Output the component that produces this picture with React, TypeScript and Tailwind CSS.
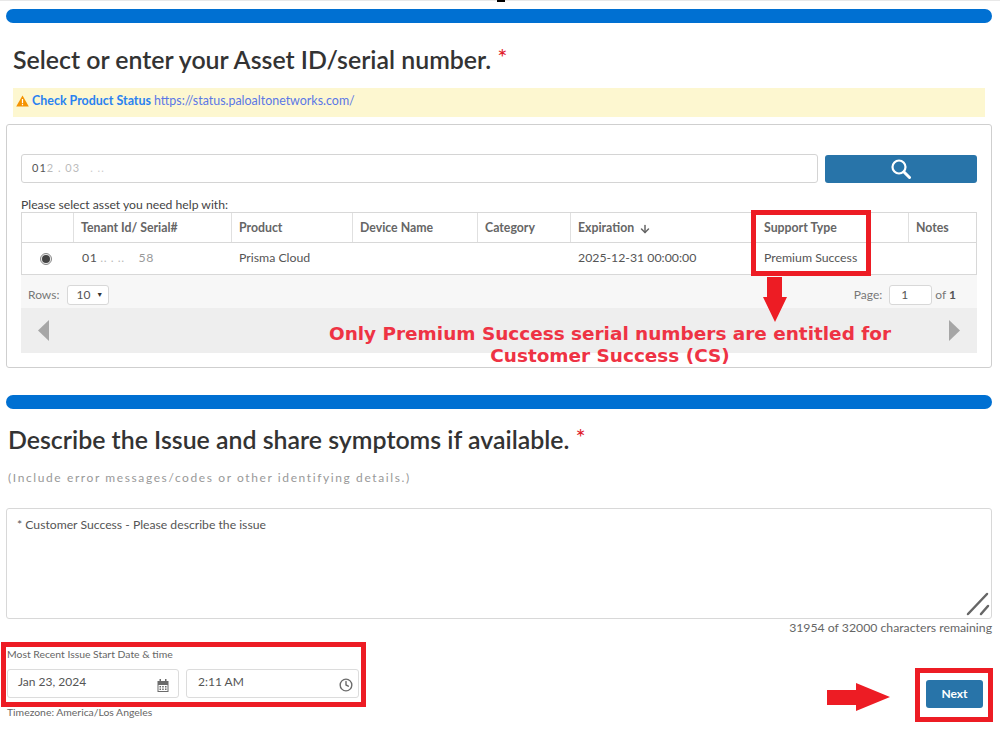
import { ArrowDown, Clock } from 'lucide-react';

const columns = [
  { label: 'Tenant Id/ Serial#', width: 'w-[158px]', pad: 'pl-[7px]' },
  { label: 'Product', width: 'w-[121px]', pad: 'pl-[7px]' },
  { label: 'Device Name', width: 'w-[125px]', pad: 'pl-[7px]' },
  { label: 'Category', width: 'w-[93px]', pad: 'pl-[7px]' },
  { label: 'Expiration', width: 'w-[183px]', pad: 'pl-[7px]' },
  { label: 'Support Type', width: 'w-[155px]', pad: 'pl-[10px]' },
];

function SectionBar() {
  return <div className="h-[14px] rounded-[7px] bg-[#0070d2]" />;
}

function Required() {
  return <span className="ml-[6px] align-[3px] text-[24px] font-normal text-[#e0202a]">*</span>;
}

function CalendarIcon() {
  return (
    <svg width="12" height="13" viewBox="0 0 12 13" className="text-[#6b6b6b]">
      <rect x="2.5" y="0" width="1.5" height="3" fill="currentColor" />
      <rect x="8" y="0" width="1.5" height="3" fill="currentColor" />
      <path d="M0.5 2h11v11h-11z M1.5 6v6h9v-6z" fill="currentColor" fillRule="evenodd" />
      <path d="M2.5 7h1.5v1.5h-1.5z M5.2 7h1.5v1.5h-1.5z M8 7h1.5v1.5h-1.5z M2.5 9.6h1.5v1.5h-1.5z M5.2 9.6h1.5v1.5h-1.5z M8 9.6h1.5v1.5h-1.5z" fill="currentColor" />
    </svg>
  );
}

function RedBox({ className }: { className: string }) {
  return <div className={`absolute border-[5px] border-[#ed1c24] ${className}`} />;
}

export default function App() {
  return (
    <div className="relative h-[730px] w-[1000px] overflow-hidden bg-white font-['Lato','Open_Sans',sans-serif] text-[#444]">
      <div className="border-t border-[#e8e8e8] pt-[8px] pr-[8px] pl-[6px]">
        <SectionBar />

        <h1 className="mt-[17px] pl-[7px] text-[24.9px] leading-[34px] font-semibold text-[#333]">
          Select or enter your Asset ID/serial number.<Required />
        </h1>

        <div className="mt-[12px] mr-[7px] ml-[7px] flex h-[29px] items-center gap-[3px] bg-[#fdf7d0] pb-[3px] pl-[3px] text-[12.45px]">
          <svg width="13" height="12" viewBox="0 0 13 12">
            <path d="M6.5 0.5 L12.8 11.5 H0.2 Z" fill="#f59300" />
            <rect x="5.9" y="4" width="1.2" height="4.2" fill="#fff" />
            <rect x="5.9" y="9" width="1.2" height="1.3" fill="#fff" />
          </svg>
          <span className="font-bold text-[#2a82f0]">Check Product Status</span>
          <span className="text-[#5a78e6]">https://status.paloaltonetworks.com/</span>
        </div>

        <div className="mt-[7px] h-[244px] rounded-[3px] border border-[#cfcfcf] px-[14px] pt-[29px]">
          <div className="flex gap-[7px]">
            <div className="flex h-[29px] w-[797px] items-center rounded-[3px] border border-[#d4d4d4] pl-[10px] text-[11px] tracking-[1px] text-[#555]">
              <span>01</span><span className="opacity-40">2 . 03</span><span className="ml-[10px] opacity-30">. ..</span>
            </div>
            <div className="mt-px flex h-[28px] w-[152px] items-center justify-center rounded-[3px] bg-[#2874a9]">
              <svg width="20" height="20" viewBox="0 0 20 20" fill="none" stroke="#fff">
                <circle cx="8" cy="8" r="6.5" strokeWidth="2.2" />
                <path d="M13 13 L18.5 18.5" strokeWidth="3" strokeLinecap="round" />
              </svg>
            </div>
          </div>

          <p className="mt-[15px] text-[12.2px] leading-[14px] text-[#444]">Please select asset you need help with:</p>

          <div className="w-[956px] border border-[#d8d8d8] text-[12.3px]">
            <div className="flex h-[30px] border-b border-[#d8d8d8] font-bold text-[#666]">
              <div className="w-[52px] border-r border-[#e0e0e0]" />
              {columns.map((col) => (
                <div key={col.label} className={`flex items-center gap-[5px] border-r border-[#e0e0e0] pt-[2px] ${col.pad} ${col.width}`}>
                  {col.label}
                  {col.label === 'Expiration' && <ArrowDown size={12} strokeWidth={3} />}
                </div>
              ))}
              <div className="flex flex-1 items-center pt-[2px] pl-[7px]">Notes</div>
            </div>
            <div className="flex h-[31px] items-center text-[#555]">
              <div className="flex w-[52px] justify-center pr-[5px]">
                <div className="flex h-[12px] w-[12px] items-center justify-center rounded-full border border-[#888] bg-[#eee]">
                  <div className="h-[8px] w-[8px] rounded-full bg-[#444]" />
                </div>
              </div>
              <div className="w-[158px] pl-[8px] tracking-[0.5px]">
                <span>01</span><span className="ml-[3px] opacity-40">.. . ..</span><span className="ml-[14px] opacity-60">58</span>
              </div>
              <div className="w-[121px] pl-[7px]">Prisma Cloud</div>
              <div className="w-[125px]" />
              <div className="w-[93px]" />
              <div className="w-[183px] pl-[7px]">2025-12-31 00:00:00</div>
              <div className="w-[155px] pl-[10px]">Premium Success</div>
            </div>
          </div>

          <div className="flex h-[33px] w-[956px] items-center justify-between bg-[#f7f7f7] pt-[6px] pr-[21px] pl-[7px] text-[12px] text-[#777]">
            <div className="flex items-center gap-[7px]">
              <span>Rows:</span>
              <div className="ml-[1px] flex h-[20px] w-[42px] items-center gap-[6px] rounded-[3px] border border-[#d8d8d8] bg-white pl-[8px] text-[#555]">
                10 <span className="text-[7px] text-[#333]">▼</span>
              </div>
            </div>
            <div className="flex items-center gap-[3px]">
              <span className="mr-[4px]">Page:</span>
              <div className="flex h-[20px] w-[43px] items-center rounded-[3px] border border-[#d8d8d8] bg-white pl-[11px] text-[#555]">1</div>
              <span>of <b className="text-[#555]">1</b></span>
            </div>
          </div>

          <div className="flex h-[45px] w-[956px] items-center justify-between bg-[#eeeeee] px-[17px]">
            <svg width="11" height="21" viewBox="0 0 11 21"><path d="M11 0V21L0 10.5Z" fill="#a6a6a6" /></svg>
            <svg width="11" height="21" viewBox="0 0 11 21"><path d="M0 0V21L11 10.5Z" fill="#a6a6a6" /></svg>
          </div>
        </div>

        <div className="mt-[27px]">
          <SectionBar />
        </div>

        <h2 className="mt-[11px] pl-[2px] text-[24.9px] leading-[34px] font-semibold text-[#333]">
          Describe the Issue and share symptoms if available.<Required />
        </h2>

        <p className="mt-[15px] pl-[2px] text-[12px] leading-[14px] tracking-[1.6px] text-[#999]">
          (Include error messages/codes or other identifying details.)
        </p>

        <div className="relative mt-[23px] h-[111px] rounded-[3px] border border-[#d8d8d8] pt-[9px] pl-[10px] text-[12.2px] leading-[14px] text-[#555]">
          * Customer Success - Please describe the issue
          <svg width="24" height="24" viewBox="0 0 24 24" className="absolute right-[1px] bottom-[2px]">
            <path d="M2 22 L21 2 M15 22 L22 14" stroke="#666" strokeWidth="2.5" strokeLinecap="round" />
          </svg>
        </div>

        <p className="mt-[2px] text-right text-[12.25px] leading-[14px] text-[#666]">31954 of 32000 characters remaining</p>

        <div className="mt-[12px] flex items-start justify-between">
          <div className="text-[10.4px] text-[#666]">
            <p className="pl-px leading-[14px]">Most Recent Issue Start Date &amp; time</p>
            <div className="mt-[8px] ml-px flex gap-[7px] text-[12px] text-[#555]">
              <div className="flex h-[29px] w-[172px] items-center justify-between rounded-[3px] border border-[#dcdcdc] pr-[9px] pl-[10px]">
                <span className="mb-[3px]">Jan 23, 2024</span>
                <span className="mt-[3px]"><CalendarIcon /></span>
              </div>
              <div className="flex h-[29px] w-[173px] items-center justify-between rounded-[3px] border border-[#dcdcdc] pr-[5px] pl-[11px]">
                <span className="mb-[3px]">2:11 AM</span>
                <Clock size={14} strokeWidth={2.4} color="#6b6b6b" className="mt-[3px]" />
              </div>
            </div>
            <p className="mt-[7px] pl-px leading-[14px]">Timezone: America/Los Angeles</p>
          </div>
          <div className="mt-[33px] mr-[9px] flex h-[28px] w-[57px] items-center justify-center rounded-[3px] bg-[#2874a9] text-[12px] font-bold text-white">
            Next
          </div>
        </div>
      </div>

      {/* annotations pasted over the screenshot */}
      <div className="absolute top-0 left-[497px] h-[2px] w-[8px] bg-black" />
      <RedBox className="top-[210px] left-[751px] h-[66px] w-[120px]" />
      <svg width="26" height="46" viewBox="0 0 26 46" className="absolute top-[277px] left-[762px]">
        <path d="M5 0 H20 V20 H25 L13 45 L1 20 H5 Z" fill="#ed1c24" />
      </svg>
      <p className="absolute top-[323px] left-[300px] w-[620px] text-center font-['DejaVu_Sans',sans-serif] text-[18.45px] leading-[22px] font-bold text-[#ee3344]">
        Only Premium Success serial numbers are entitled for
        <br />
        Customer Success (CS)
      </p>
      <RedBox className="top-[642px] left-[1px] h-[65px] w-[365px]" />
      <RedBox className="top-[668px] left-[915px] h-[54px] w-[78px]" />
      <svg width="65" height="29" viewBox="0 0 65 29" className="absolute top-[683px] left-[826px]">
        <path d="M1 7 H30 V0 L64 14 L30 28 V22 H1 Z" fill="#ed1c24" />
      </svg>
    </div>
  );
}
